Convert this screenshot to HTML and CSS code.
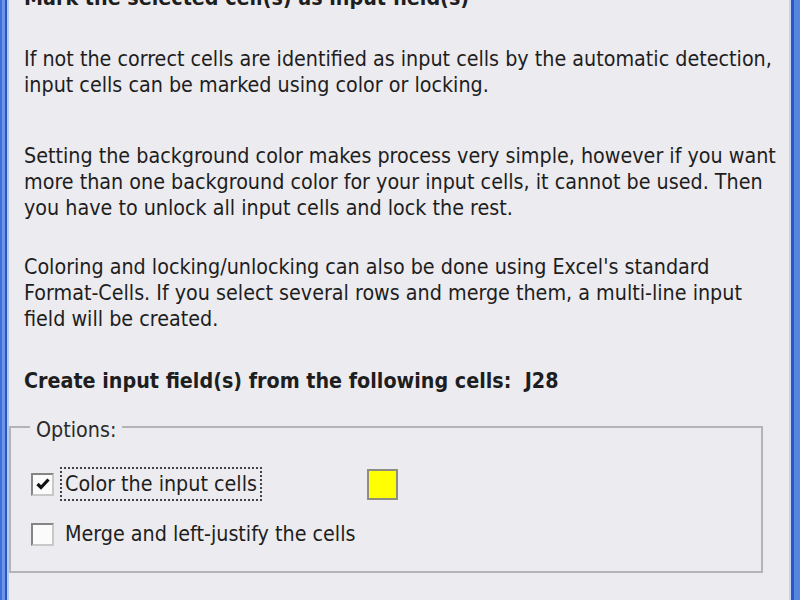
FILE: index.html
```html
<!DOCTYPE html>
<html>
<head>
<meta charset="utf-8">
<link rel="stylesheet" href="styles.css">
</head>
<body>
<div class="window">
  <div class="frame-left"></div>
  <div class="content">
    <h1 class="title">Mark the selected cell(s) as input field(s)</h1>
    <p class="para p1">If not the correct cells are identified as input cells by the automatic detection,<br>input cells can be marked using color or locking.</p>
    <p class="para p2">Setting the background color makes process very simple, however if you want<br>more than one background color for your input cells, it cannot be used. Then<br>you have to unlock all input cells and lock the rest.</p>
    <p class="para p3">Coloring and locking/unlocking can also be done using Excel's standard<br>Format-Cells. If you select several rows and merge them, a multi-line input<br>field will be created.</p>
    <p class="strong">Create input field(s) from the following cells:&nbsp; J28</p>
    <fieldset class="options">
      <legend class="legend">Options:</legend>
      <div class="row first">
        <span class="check checked">
          <svg width="16" height="16" viewBox="0 0 16 16"><polyline points="2.5,8 6,11.5 13.5,3.5" fill="none" stroke="#111" stroke-width="3.2"/></svg>
        </span>
        <span class="label focused">Color the input cells</span>
        <span class="swatch"></span>
      </div>
      <div class="row">
        <span class="check"></span>
        <span class="label">Merge and left-justify the cells</span>
      </div>
    </fieldset>
  </div>
  <div class="frame-right"></div>
</div>
</body>
</html>
```
FILE: styles.css
```css
html, body {
  margin: 0;
  padding: 0;
  height: 600px;
  overflow: hidden;
}
body {
  background: #ecebef;
  font-family: "DejaVu Sans Condensed", "DejaVu Sans", sans-serif;
  font-size: 21.3px;
  line-height: 26px;
  color: #1e1e1e;
}
.window {
  display: flex;
  height: 600px;
}
.frame-left {
  width: 9px;
  flex: none;
  background: linear-gradient(to right, #3d6fd8 0 2px, #6b96e6 2px 5px, #2856c0 5px 7px, #b6cbf0 7px 9px);
}
.frame-right {
  width: 11px;
  flex: none;
  background: linear-gradient(to right, #c4d4f2 0 2px, #2a58c0 2px 5px, #5585e0 5px 11px);
}
.content {
  flex: 1;
  padding: 0 0 0 15px;
  margin-top: -15px;
  white-space: nowrap;
}
.title {
  font-size: 21.3px;
  line-height: 26px;
  font-weight: bold;
  margin: 0;
}
.para {
  margin: 0;
}
.p1 { margin-top: 35px; }
.p2 { margin-top: 45px; }
.p3 { margin-top: 33px; }
.strong {
  margin: 36px 0 0 0;
  font-weight: bold;
  white-space: pre;
}
.options {
  margin: 17px 0 0 0;
  margin-left: -15px;
  width: 754px;
  height: 162px;
  box-sizing: border-box;
  border: 2px solid #b4b4b6;
  padding: 0 0 0 20px;
}
.legend {
  padding: 6px 6px 0;
  margin-left: -1px;
  color: #2a2a2a;
}
.row {
  display: flex;
  align-items: center;
  height: 34px;
  margin-top: 16px;
}
.row.first {
  margin-top: 24px;
}
.check {
  width: 23px;
  height: 23px;
  box-sizing: border-box;
  border: 2px solid #858585;
  border-right-color: #c8c8c8;
  border-bottom-color: #c8c8c8;
  background: #fbfbfb;
  display: flex;
  align-items: center;
  justify-content: center;
  margin-right: 6px;
}
.label {
  padding: 2px 3px;
  border: 2px dotted transparent;
}
.label.focused {
  border-color: #444;
}
.swatch {
  width: 31px;
  height: 31px;
  box-sizing: border-box;
  border: 2px solid #8e8e80;
  background: #ffff00;
  margin-left: 105px;
}
```
